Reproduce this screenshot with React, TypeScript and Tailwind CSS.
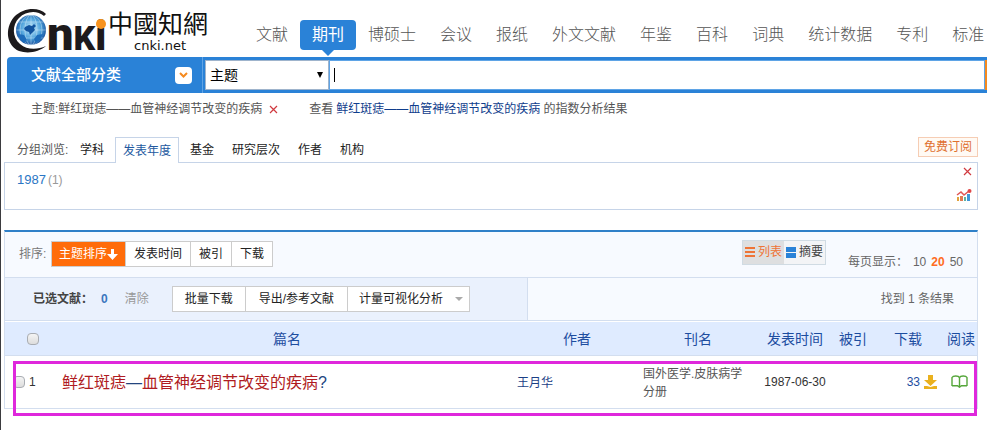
import React, { useState } from 'react'

const CHANNELS = ['文献', '期刊', '博硕士', '会议', '报纸', '外文文献', '年鉴', '百科', '词典', '统计数据', '专利', '标准']
const GROUPS = ['学科', '发表年度', '基金', '研究层次', '作者', '机构']
const SORTS = ['主题排序', '发表时间', '被引', '下载']
const PAGE_SIZES = [10, 20, 50]

const Logo = () => (
  <svg width="210" height="56" viewBox="0 0 210 56" className="shrink-0" role="img" aria-label="中國知網 cnki.net">
    <defs>
      <radialGradient id="globe" cx="0.5" cy="0.45" r="0.55">
        <stop offset="0" stopColor="#c9ecfb" />
        <stop offset="0.6" stopColor="#4fa3dc" />
        <stop offset="1" stopColor="#174f9c" />
      </radialGradient>
    </defs>
    {/* Ring around the globe */}
    <path
      d="M45 14C38 7 23 7 13 17C3 29 6 46 18 51C27 54 38 52 45 46C36 50 26 50 19 44C11 37 11 25 18 18C25 11 36 10 43 16Z"
      fill="#1d1a1c"
    />
    <circle cx="30" cy="30" r="15" fill="url(#globe)" />
    <g fill="none" stroke="#e4f6fd" strokeWidth="0.5" opacity="0.8">
      <path d="M15 30h30M17 22h26M17 38h26M30 15v30" />
      <ellipse cx="30" cy="30" rx="6" ry="15" />
      <ellipse cx="30" cy="30" rx="11" ry="15" />
    </g>
    <path d="M24 27l4-2 3 1 2-2 2 2-2 2 1 2-3 3-2 2-1-3-3-1-2-2z" fill="#12549f" />
    <path d="M17 34l6 1 3 5-3 3c-3-2-5-5-6-9zM36 35l6-1-3 6-4 3-2-4z" fill="#1d6cba" />
    <text x="46" y="50" fill="#1d1a1c" fontWeight="900" fontFamily="Roboto, 'Liberation Sans', sans-serif">
      <tspan fontSize="47">n</tspan>
      <tspan fontSize="34">K</tspan>
      <tspan fontSize="40">i</tspan>
    </text>
    <circle cx="100" cy="24" r="5" fill="#f7931e" />
    <text x="107" y="33" fontSize="25" fill="#111111" fontFamily="'Noto Sans CJK TC', sans-serif">中國知網</text>
    <text x="159" y="50" fontSize="13" fill="#111111" textAnchor="middle" fontFamily="'DejaVu Sans', sans-serif">cnki.net</text>
  </svg>
)

const CrossIcon = () => (
  <svg width="9" height="9" viewBox="0 0 9 9" className="block" fill="none" stroke="#d0393f" strokeWidth="1.2" aria-hidden="true">
    <path d="M1 1l7 7M8 1l-7 7" />
  </svg>
)

const ChartIcon = () => (
  <svg width="16" height="12" viewBox="0 0 16 12" className="block" aria-hidden="true">
    <path d="M1 8h2v4H1z" fill="#e2a23b" />
    <path d="M4 7h3v5H4z" fill="#e07b53" />
    <path d="M8 8h2v4H8z" fill="#5fb3a0" />
    <path d="M11 5h3v7h-3z" fill="#3f97d8" />
    <path d="M1 6l4-3 3 3 5-4" fill="none" stroke="#e05555" strokeWidth="1.5" />
    <circle cx="13.5" cy="2" r="2" fill="#e04848" />
  </svg>
)

const DownloadIcon = () => (
  <svg width="13" height="14" viewBox="0 0 13 14" fill="#eab11e" aria-hidden="true">
    <path d="M4 0h5v5h4L6.500 11 0 5h4zM0 11h3l3.500 1L10 11h3v3H0z" />
  </svg>
)

const BookIcon = () => (
  <svg width="17" height="13" viewBox="0 0 17 13" fill="none" stroke="#55a63a" strokeWidth="1.4" aria-hidden="true">
    <path d="M1 11V2.500C2 .6 7.500.3 8.500 2.800C9.500.3 15 .6 16 2.500V11M1 10.700h5.500l2 1.500 2-1.500H16M8.500 2.800V12" />
  </svg>
)

const checkboxClass =
  'block w-3 h-3 shrink-0 appearance-none rounded-sm border border-[#a9adb3] bg-linear-to-b from-[#f4f4f4] to-[#dddddd] checked:bg-[#2a82d7]'

export default function App() {
  const [sort, setSort] = useState('主题排序')
  const [group, setGroup] = useState('发表年度')
  const [query, setQuery] = useState('')

  return (
    <div className="min-h-screen overflow-x-hidden border-l border-[#3b3b3f] bg-white font-['Liberation_Sans','Noto_Sans_CJK_SC',sans-serif] text-xs leading-4 text-[#333333]">
      {/* Header */}
      <header className="flex h-[57px] items-start">
        <Logo />
        <nav className="ml-[33px] flex pt-5 text-base leading-[30px] whitespace-nowrap text-[#555555]">
          {CHANNELS.map((name) =>
            name === '期刊' ? (
              <a key={name} href="#" className="relative h-[30px] rounded-sm bg-[#2a82d7] px-3 text-white">
                {name}
                <span className="absolute top-full left-1/2 -translate-x-1/2 border-x-6 border-t-6 border-x-transparent border-t-[#2a82d7]" />
              </a>
            ) : (
              <a key={name} href="#" className="h-[30px] px-3 font-light">
                {name}
              </a>
            )
          )}
        </nav>
      </header>

      {/* Search bar */}
      <form className="ml-1.5 flex h-9 rounded-tl-sm bg-[#2a82d7]" onSubmit={(e) => e.preventDefault()}>
        <div className="flex w-[196px] items-center justify-between border-r border-[#5fa4e6] pr-2.5 pl-6">
          <span className="text-[15px] leading-5 font-medium text-white">文献全部分类</span>
          <button type="button" aria-label="展开分类" className="flex h-[17px] w-[17px] items-center justify-center rounded-sm bg-white">
            <svg width="9" height="6" viewBox="0 0 9 6" fill="none" stroke="#f58a1f" strokeWidth="2" aria-hidden="true">
              <path d="M1 1l3.500 3.500L8 1" />
            </svg>
          </button>
        </div>
        <div className="relative my-[3px] ml-0.5 w-[124px]">
          <select aria-label="检索字段" className="h-full w-full appearance-none border border-[#9fb4cc] bg-white pl-1 text-sm text-black">
            <option>主题</option>
            <option>篇名</option>
            <option>作者</option>
          </select>
          <span className="pointer-events-none absolute top-1/2 right-1.5 -translate-y-1/2 border-x-3 border-t-6 border-x-transparent border-t-black" />
        </div>
        <div className="my-[3px] flex min-w-0 flex-1 items-center border border-[#5fa4e6] bg-white pl-1">
          {!query && <span className="h-3.5 w-px bg-black" />}
          <input
            aria-label="检索词"
            value={query}
            onChange={(e) => setQuery(e.target.value)}
            className="h-full min-w-0 flex-1 text-sm outline-none"
          />
        </div>
        <button type="submit" aria-label="检索" className="my-[3px] w-0.5 bg-[#f58a1f]" />
      </form>

      <div className="mt-2 ml-[30px] flex items-center whitespace-nowrap text-[#555555]">
        <span>主题:鲜红斑痣——血管神经调节改变的疾病</span>
        <button type="button" aria-label="移除条件" className="ml-[7px]">
          <CrossIcon />
        </button>
        <span className="ml-[31px]">查看</span>
        <a href="#" className="mx-[3px] text-[#0f3d8c]">鲜红斑痣——血管神经调节改变的疾病</a>
        <span>的指数分析结果</span>
      </div>

      {/* Group browsing */}
      <section className="mt-5 mr-[9px] ml-[3px]">
        <div className="flex items-start justify-between pl-[13px]">
          <div className="flex leading-6 text-[#222222]">
            <span className="w-[54px] pt-px text-[#555555]">分组浏览:</span>
            {GROUPS.map((g) => (
              <button
                key={g}
                type="button"
                onClick={() => setGroup(g)}
                className={
                  g === group
                    ? 'relative z-10 mx-0.5 -mb-px h-[26px] border border-b-0 border-[#c6d4e8] bg-white px-[7px] text-[#23599f]'
                    : 'px-[9px]'
                }
              >
                {g}
              </button>
            ))}
          </div>
          <a href="#" className="border border-[#f6cdb4] bg-[#fffaf4] px-[5px] pt-px leading-[17px] text-[#e0702f]">免费订阅</a>
        </div>
        <div className="flex h-12 justify-between border border-[#c6d4e8] pt-1 pr-[5px] pb-2 pl-3">
          <div className="pt-[5px]">
            <a href="#" className="text-[13px] text-[#2a76c4]">1987</a>
            <span className="ml-0.5 text-[#999999]">(1)</span>
          </div>
          <div className="flex flex-col items-end justify-between">
            <button type="button" aria-label="关闭">
              <CrossIcon />
            </button>
            <button type="button" aria-label="图表">
              <ChartIcon />
            </button>
          </div>
        </div>
      </section>

      {/* Results */}
      <section className="relative mt-5 mr-[9px] ml-[3px] border border-t-2 border-[#d3deef] border-t-[#2f80c8]">
        <div className="flex h-[46px] items-start justify-between border-b border-[#d3deef] bg-[#f7faff] pt-2 pr-3.5 pl-3.5">
          <div className="flex items-center pt-px text-[#222222]">
            <span className="w-8 text-[#777777]">排序:</span>
            <div className="flex divide-x divide-[#cccccc] border border-[#cccccc] bg-white leading-6">
              {SORTS.map((s) => (
                <button
                  key={s}
                  type="button"
                  onClick={() => setSort(s)}
                  className={s === sort ? 'flex items-center bg-[#ff6c0a] px-[7px] text-white' : 'px-2'}
                >
                  {s}
                  {s === sort && (
                    <svg width="11" height="11" viewBox="0 0 11 11" fill="#ffffff" aria-hidden="true">
                      <path d="M4 0h3v5h4L5.500 11 0 5h4z" />
                    </svg>
                  )}
                </button>
              ))}
            </div>
          </div>
          <div className="flex">
            <div className="mr-[22px] flex h-[25px] border border-[#d0dbe3] leading-[23px]">
              <button type="button" className="flex items-center gap-[3px] bg-[#dedfe0] px-0.5 text-[#ee7436]">
                <svg width="10" height="11" viewBox="0 0 10 11" fill="#ee7436" aria-hidden="true">
                  <path d="M0 0h10v2H0zM0 4h10v2H0zM0 8h10v2H0z" />
                </svg>
                列表
              </button>
              <button type="button" className="flex items-center gap-[3px] bg-[#f3f4f6] px-0.5 text-[#444444]">
                <svg width="10" height="11" viewBox="0 0 10 11" fill="#2a82d7" aria-hidden="true">
                  <path d="M0 0h10v5H0zM0 6h10v5H0z" />
                </svg>
                摘要
              </button>
            </div>
            <div className="flex items-start gap-[5px] pt-3.5 text-[#666666]">
              <span>每页显示：</span>
              {PAGE_SIZES.map((n) => (
                <a key={n} href="#" className={n === 20 ? 'font-bold text-[#ff6c22]' : ''}>
                  {n}
                </a>
              ))}
            </div>
          </div>
        </div>

        <div className="flex h-[43px] border-b border-[#d3deef] bg-[#f7faff]">
          <div className="flex w-[523px] items-center border-r border-[#d3deef] bg-[#eaf1fd] pl-7">
            <span className="w-[68px] font-bold text-[#444444]">已选文献：</span>
            <span className="font-bold text-[#3a76bd]">0</span>
            <button type="button" className="ml-[17px] text-[#999999]">清除</button>
            <div className="ml-[23px] flex divide-x divide-[#cccccc] border border-[#cccccc] bg-white leading-6 text-[#222222]">
              <button type="button" className="px-3">批量下载</button>
              <button type="button" className="px-[13px]">导出/参考文献</button>
              <button type="button" className="flex items-center gap-3 pr-1.5 pl-[11px]">
                计量可视化分析
                <span className="border-x-4 border-t-4 border-x-transparent border-t-[#aaaaaa]" />
              </button>
            </div>
          </div>
          <span className="ml-auto self-center pr-[23px] text-[#666666]">找到 1 条结果</span>
        </div>

        <table className="w-full table-fixed border-collapse">
          <thead>
            <tr className="h-[34px] border-y border-t-white border-b-[#d3deef] bg-[#dfebff] text-sm text-[#1d4d9f]">
              <th className="w-14 p-0">
                <input type="checkbox" aria-label="全选" className={`${checkboxClass} mx-auto`} />
              </th>
              <th className="p-0 font-normal">篇名</th>
              <th className="w-32 p-0 font-normal">作者</th>
              <th className="w-[114px] p-0 font-normal">刊名</th>
              <th className="w-20 p-0 font-normal">发表时间</th>
              <th className="w-9 p-0 font-normal">被引</th>
              <th className="w-[74px] p-0 font-normal">下载</th>
              <th className="w-8 p-0 font-normal">阅读</th>
            </tr>
          </thead>
          <tbody>
            <tr className="h-[52px]">
              <td className="p-0 pl-2">
                <label className="flex items-center gap-1">
                  <input type="checkbox" className={checkboxClass} />1
                </label>
              </td>
              <td className="p-0 pt-0.5 pl-px text-base whitespace-nowrap">
                <a href="#" className="text-[#23457f]">
                  <span className="text-[#b01c22]">鲜红斑痣</span>—<span className="text-[#b01c22]">血管神经调节改变的疾病</span>?
                </a>
              </td>
              <td className="p-0 pt-0.5 pl-1">
                <a href="#" className="text-[#1c3f86]">王月华</a>
              </td>
              <td className="p-0 pt-0.5 pr-3 pl-0.5 leading-[18px]">
                <a href="#" className="text-[#555555]">国外医学.皮肤病学分册</a>
              </td>
              <td className="p-0 text-center">1987-06-30</td>
              <td className="p-0" />
              <td className="p-0">
                <a href="#" className="flex items-center justify-end gap-1 pr-2 text-[#1d4d9f]">
                  33
                  <DownloadIcon />
                </a>
              </td>
              <td className="p-0">
                <a href="#" aria-label="阅读" className="flex justify-center pr-1">
                  <BookIcon />
                </a>
              </td>
            </tr>
          </tbody>
        </table>

        {/* Highlight frame over the matched row */}
        <div className="pointer-events-none absolute right-0 -bottom-2 left-2 h-[55px] border-3 border-[#df28dc]" />
      </section>
    </div>
  )
}
